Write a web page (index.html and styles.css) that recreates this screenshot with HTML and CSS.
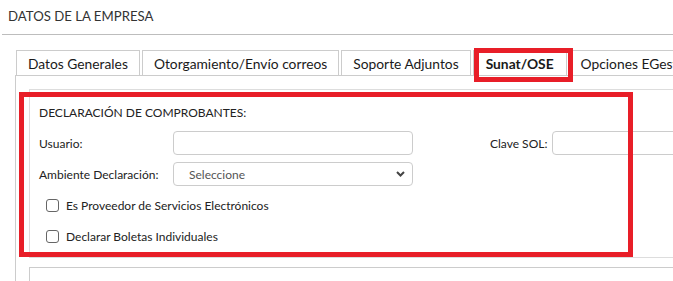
FILE: index.html
```html
<!DOCTYPE html>
<html>
<head>
    <title>Datos de la Empresa</title>
    <link rel="stylesheet" href="styles.css">
</head>
<body>
    <div class="page-title">DATOS DE LA EMPRESA</div>

    <div class="content">
        <ul class="tabs">
            <li class="tab">Datos Generales</li>
            <li class="tab">Otorgamiento/Envío correos</li>
            <li class="tab">Soporte Adjuntos</li>
            <li class="tab active">Sunat/OSE</li>
            <li class="tab">Opciones EGestor</li>
        </ul>

        <div class="tab-panel">
            <div class="box">
                <div class="box-title">DECLARACIÓN DE COMPROBANTES:</div>

                <div class="row">
                    <label class="label">Usuario:</label>
                    <input class="field" type="text">
                    <label class="label label-right">Clave SOL:</label>
                    <input class="field field-wide" type="password">
                </div>

                <div class="row">
                    <label class="label">Ambiente Declaración:</label>
                    <div class="field select">
                        <span>Seleccione</span>
                        <svg width="9" height="6" viewBox="0 0 9 6"><path d="M1 1l3.5 3.5L8 1" fill="none" stroke="#444" stroke-width="2"/></svg>
                    </div>
                </div>

                <div class="checks">
                    <label class="check"><span class="box-check"></span>Es Proveedor de Servicios Electrónicos</label>
                    <label class="check"><span class="box-check"></span>Declarar Boletas Individuales</label>
                </div>
            </div>

            <div class="box box-next"></div>
        </div>
    </div>

    <!-- highlight marks -->
    <div class="mark mark-tab"></div>
    <div class="mark mark-box"></div>
</body>
</html>
```

FILE: styles.css
```css
body {
    margin: 0;
    font-family: Lato, "Noto Sans", sans-serif;
    color: #222;
    background: #fff;
    overflow: hidden;
}
.page-title {
    height: 34px;
    margin-left: 2px;
    padding-left: 6px;
    border-bottom: 1px solid #bdbdbd;
    font-size: 13.2px;
    line-height: 32px;
    color: #333;
}
.content {
    padding: 15px 0 0 15px;
}
.tabs {
    display: flex;
    gap: 2px;
    margin: 0 0 0 1px;
    padding: 0;
    list-style: none;
    white-space: nowrap;
}
.tab {
    height: 24px;
    padding: 0 11px;
    border: 1px solid #ccc;
    border-bottom: none;
    font-size: 13.8px;
    line-height: 25px;
    color: #1a1a1a;
}
.tab.active {
    font-weight: bold;
    padding: 0 12px;
}
.tab-panel {
    border-top: 1px solid #ccc;
    border-left: 1px solid #ccc;
    padding: 13px 0 0 13px;
}
.box {
    width: 700px;
    height: 167px;
    border: 1px solid #ddd;
    padding: 0 9px;
    font-size: 12px;
    color: #222;
}
.box-next {
    height: 20px;
    margin-top: 9px;
    border-color: #ccc;
}
.box-title {
    padding-top: 15px;
    height: 26px;
}
.row {
    display: flex;
    align-items: center;
    height: 24px;
    margin-bottom: 7px;
    white-space: nowrap;
}
.row > * {
    flex-shrink: 0;
}
.label {
    width: 134px;
}
.label-right {
    width: auto;
    margin-left: 77px;
    margin-right: 5px;
}
.field {
    box-sizing: border-box;
    width: 240px;
    height: 24px;
    border: 1px solid #ccc;
    border-radius: 4px;
    font-family: inherit;
    font-size: 12px;
}
.field-wide {
    width: 200px;
}
.select {
    display: flex;
    align-items: center;
    justify-content: space-between;
    padding: 0 7px 0 15px;
    color: #555;
}
.checks {
    margin-top: -3px;
}
.check {
    display: flex;
    align-items: center;
    height: 31px;
    padding-left: 7px;
}
.box-check {
    width: 11px;
    height: 11px;
    border: 1px solid #666;
    border-radius: 3px;
    margin-right: 7px;
}
.mark {
    position: absolute;
    border: 5px solid #e81e28;
}
.mark-tab {
    left: 474px;
    top: 48px;
    width: 89px;
    height: 24px;
}
.mark-box {
    left: 19px;
    top: 92px;
    width: 604px;
    height: 155px;
}
```
